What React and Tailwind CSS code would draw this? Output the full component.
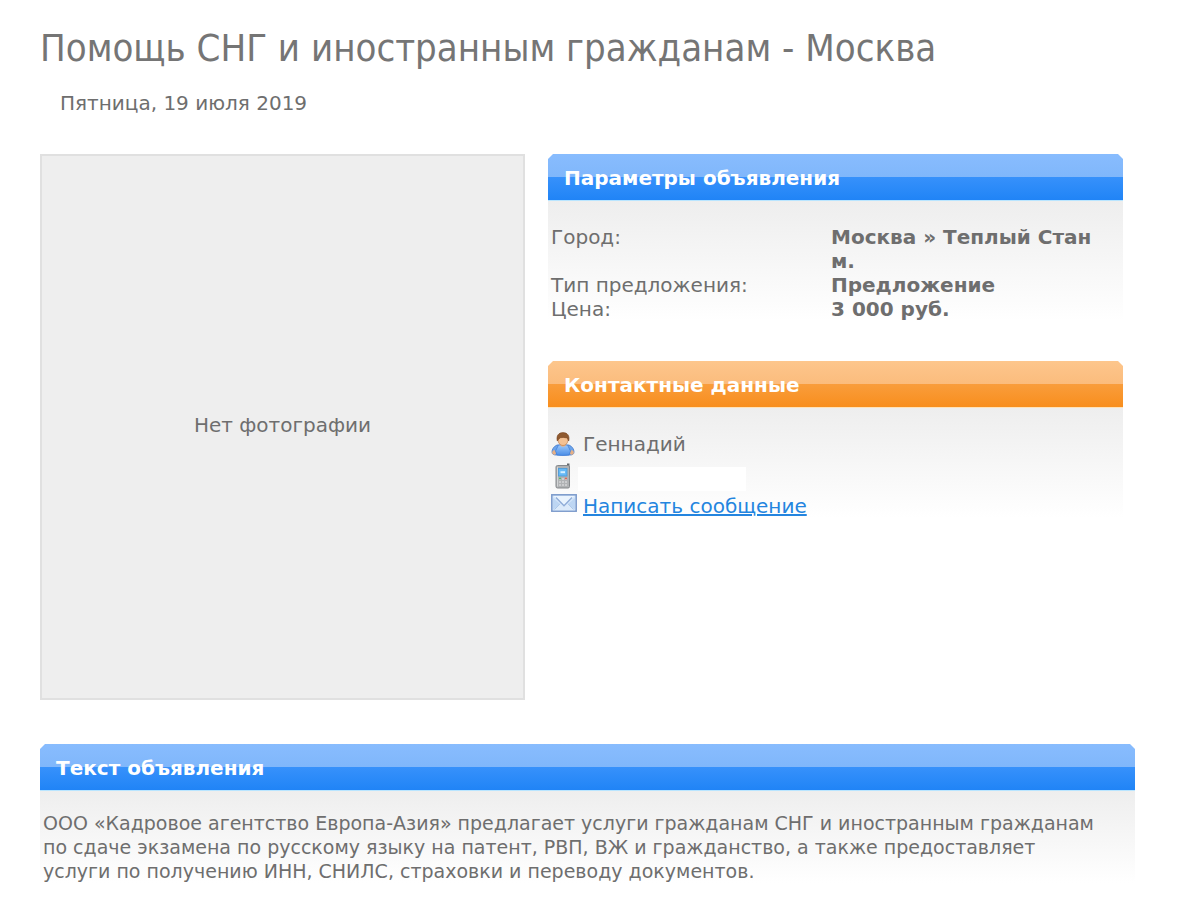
function PersonIcon() {
  return (
    <svg viewBox="0 0 24 24" className="h-6 w-6" aria-hidden="true">
      <defs>
        <linearGradient id="shirt" x1="0" y1="0" x2="0" y2="1">
          <stop offset="0" stopColor="#9cc8fb" />
          <stop offset="1" stopColor="#4a8de6" />
        </linearGradient>
      </defs>
      <path d="M6 13C2.500 14.500 1 17.500 1 20c0 2 1.500 3 4 3h14c2.500 0 4-1 4-3 0-2.500-1.500-5.500-5-7z" fill="#6ba4ec" stroke="#3f76c8" strokeWidth=".8" />
      <ellipse cx="3.200" cy="20.500" rx="2" ry="2.200" fill="#e8b083" />
      <ellipse cx="20.800" cy="20.500" rx="2" ry="2.200" fill="#e8b083" />
      <path d="M7.500 13h9l3 6-1.500 4q-6 1-12 0l-1.500-4z" fill="url(#shirt)" stroke="#3f7bd6" strokeWidth=".7" />
      <path d="M8.500 12.500q3.500 4.500 7 0z" fill="#eeb482" />
      <ellipse cx="12" cy="8" rx="5" ry="5.500" fill="#f4c193" stroke="#b87545" strokeWidth=".6" />
      <path d="M6.300 9C5 3.500 7.800.6 12 .6s7 2.900 5.700 8.400l-1.300-3q-4.400-1-6.900-.3-1.900.8-3.200 3.300z" fill="#8f5a30" stroke="#794522" strokeWidth=".6" />
    </svg>
  );
}

function PhoneIcon() {
  return (
    <svg viewBox="0 0 24 26" className="h-[26px] w-6" aria-hidden="true">
      <path d="M16 .5h2.500v6H16z" fill="#64686b" />
      <rect x="5" y="2.500" width="13.500" height="22.500" rx="1.500" fill="#b0b2b4" stroke="#85888b" />
      <path d="M6.500 4v19.500" stroke="#d3d5d6" strokeWidth="1" />
      <rect x="7.500" y="5.500" width="8.500" height="7.500" fill="#66b9f5" stroke="#4a98d8" strokeWidth=".8" />
      <path d="M9.500 9.200h4.500" stroke="#d5efff" strokeWidth="2" />
      <path d="M8 16h8M8 19h8M8 22h8" stroke="#d3d5d6" strokeWidth="1.300" strokeDasharray="2 1" />
      <path d="M8 15.500h2" stroke="#58b868" strokeWidth="1.400" />
      <path d="M14 15.500h2" stroke="#e06554" strokeWidth="1.400" />
    </svg>
  );
}

function MailIcon() {
  return (
    <svg viewBox="0 0 26 18" className="h-[18px] w-[26px]" aria-hidden="true">
      <rect x=".8" y=".8" width="24.400" height="16.400" fill="#d3e5f9" stroke="#7b9acb" strokeWidth="1.500" />
      <path d="M2 16V4l7 6zM24 16V4l-7 6z" fill="#bdd6f3" />
      <path d="M2 16.200L9.500 9.500 13 12l3.500-2.500 7.500 6.700z" fill="#dceafa" />
      <path d="M2.500 2h21L13 11.800z" fill="#eaf4fe" />
      <path d="M5 3.500l8 8.200 8-8.200" fill="none" stroke="#8facd8" strokeWidth="1.300" />
      <path d="M3.500 15.500L9 9.800M22.500 15.500L17 9.800" fill="none" stroke="#a9c5e8" strokeWidth="1" />
    </svg>
  );
}

const TONES = {
  blue: "border-[#b9e5ff] bg-[linear-gradient(#88bcfe_0%,#80b7fb_49%,#3791fb_50%,#2084f6_100%)]",
  orange: "border-[#ffe2b8] bg-[linear-gradient(#fdc68c_0%,#fbbc7d_49%,#f99d3c_50%,#f88e1d_100%)]",
};

function Panel({ title, tone, children }) {
  return (
    <section>
      <h2
        className={`h-[47px] border-b px-4 text-xl/12 font-bold text-white [clip-path:polygon(0_5px,5px_0,calc(100%-5px)_0,100%_5px,100%_100%,0_100%)] ${TONES[tone]}`}
      >
        {title}
      </h2>
      <div className="bg-linear-to-b from-[#eeeeee] to-white px-[3px]">{children}</div>
    </section>
  );
}

const PARAMS = [
  ["Город:", "Москва » Теплый Стан м."],
  ["Тип предложения:", "Предложение"],
  ["Цена:", "3 000 руб."],
];

export default function App() {
  return (
    <main className="bg-white pt-6 pr-[65px] pb-5 pl-10 font-['Verdana','DejaVu_Sans',sans-serif] text-xl/6 text-[#6e6e6e]">
      <h1 className="font-['DejaVu_Sans_Condensed','DejaVu_Sans',sans-serif] text-[38px]/12 text-[#757575]">
        Помощь СНГ и иностранным гражданам - Москва
      </h1>
      <p className="mt-[19px] pl-5">Пятница, 19 июля 2019</p>

      <div className="mt-[39px] grid grid-cols-[485fr_575fr] gap-[23px] pr-3">
        <div className="flex h-[546px] items-center justify-center border-2 border-[#e0e0e0] bg-[#eeeeee] pb-1">
          Нет фотографии
        </div>
        <div className="flex flex-col gap-10">
          <Panel title="Параметры объявления" tone="blue">
            <div className="pt-6">
              <table className="w-full table-fixed">
                <tbody>
                  {PARAMS.map(([label, value]) => (
                    <tr key={label} className="align-top">
                      <th scope="row" className="w-[280px] p-0 text-left font-normal">{label}</th>
                      <td className="p-0 font-bold">{value}</td>
                    </tr>
                  ))}
                </tbody>
              </table>
            </div>
          </Panel>
          <Panel title="Контактные данные" tone="orange">
            <ul className="pt-6">
              <li className="flex h-[31px] items-start gap-2">
                <PersonIcon />
                Геннадий
              </li>
              <li className="flex h-[31px] items-start gap-[3px]">
                <PhoneIcon />
                <span className="mt-1 h-6 w-[168px] bg-white" />
              </li>
              <li className="flex h-6 items-start gap-1.5">
                <MailIcon />
                <a href="#message" className="text-[#2485df] underline">Написать сообщение</a>
              </li>
            </ul>
          </Panel>
        </div>
      </div>

      <div className="mt-11">
        <Panel title="Текст объявления" tone="blue">
          <p className="pt-5 text-[19px]/6">
            ООО «Кадровое агентство Европа-Азия» предлагает услуги гражданам СНГ и иностранным гражданам
            <br />
            по сдаче экзамена по русскому языку на патент, РВП, ВЖ и гражданство, а также предоставляет
            <br />
            услуги по получению ИНН, СНИЛС, страховки и переводу документов.
          </p>
        </Panel>
      </div>
    </main>
  );
}
